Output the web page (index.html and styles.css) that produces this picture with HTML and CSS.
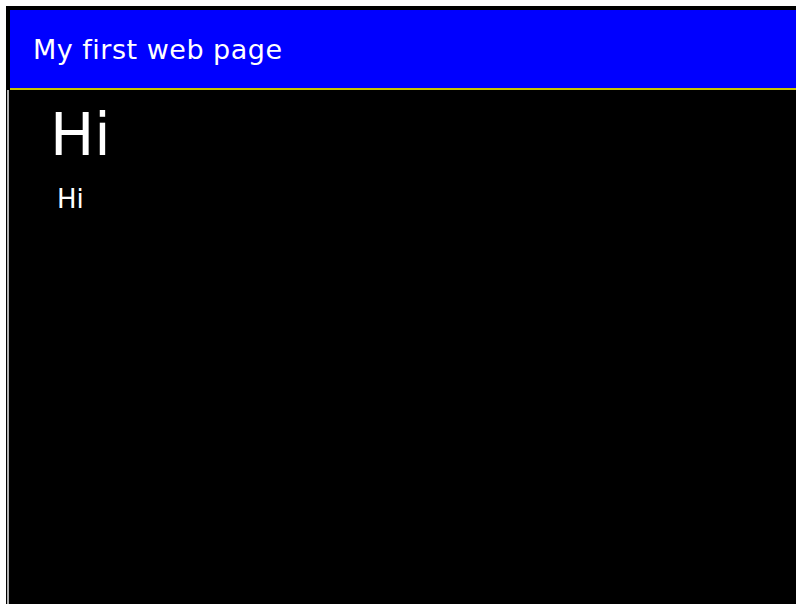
FILE: index.html
```html
<!DOCTYPE html>
<html>
<head>
<meta charset="utf-8">
<title>My first web page</title>
<link rel="stylesheet" href="styles.css">
</head>
<body>
<div class="window">
  <header class="title-bar">My first web page</header>
  <main class="content">
    <h1 class="headline">Hi</h1>
    <p class="text">Hi</p>
  </main>
</div>
</body>
</html>
```
FILE: styles.css
```css
html, body {
  margin: 0;
  height: 100%;
  background: #ffffff;
}

body {
  padding: 6px 0 0 6px;
  box-sizing: border-box;
  font-family: "DejaVu Sans", Verdana, sans-serif;
}

/* outer frame of the page window */
.window {
  height: 100%;
  display: flex;
  flex-direction: column;
  background: #000000;
}

.title-bar {
  height: 80px;
  box-sizing: border-box;
  margin: 4px 0 0 4px;
  padding-left: 23px;
  display: flex;
  align-items: center;
  background: #0000ff;
  color: #ffffff;
  font-size: 27px;
  letter-spacing: 0.5px;
  border-bottom: 2px solid #c8c400;
}

.content {
  flex: 1;
  border-left: 2px solid #b0b0b0;
  margin-left: 1px;
  padding: 0 0 0 40px;
  color: #ffffff;
}

.headline {
  margin: 10px 0 0 1px;
  font-size: 59px;
  font-weight: normal;
  line-height: 70px;
}

.text {
  margin: 13px 0 0 8px;
  font-size: 26px;
  line-height: 32px;
}
```
